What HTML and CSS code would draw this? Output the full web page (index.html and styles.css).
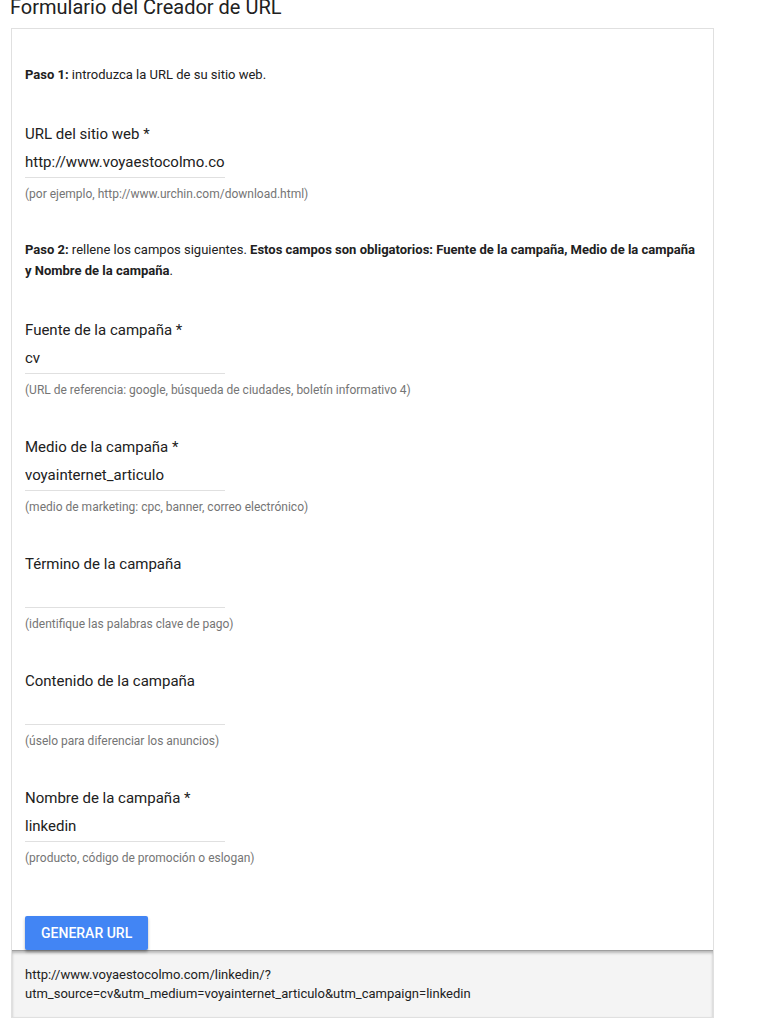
FILE: index.html
```html
<!DOCTYPE html>
<html lang="es">
<head>
<meta charset="utf-8">
<title>Formulario del Creador de URL</title>
<link rel="stylesheet" href="styles.css">
</head>
<body>
<h1 class="title">Formulario del Creador de URL</h1>
<div class="card">
  <div class="form">
    <p class="step"><b>Paso 1:</b> introduzca la URL de su sitio web.</p>
    <div class="field">
      <label class="label">URL del sitio web *</label>
      <input class="input" type="text" value="http://www.voyaestocolmo.com/linkedin/">
      <div class="hint">(por ejemplo, http://www.urchin.com/download.html)</div>
    </div>
    <p class="step"><b>Paso 2:</b> rellene los campos siguientes. <b>Estos campos son obligatorios: Fuente de la campaña, Medio de la campaña y Nombre de la campaña</b>.</p>
    <div class="field">
      <label class="label">Fuente de la campaña *</label>
      <input class="input" type="text" value="cv">
      <div class="hint">(URL de referencia: google, búsqueda de ciudades, boletín informativo 4)</div>
    </div>
    <div class="field">
      <label class="label">Medio de la campaña *</label>
      <input class="input" type="text" value="voyainternet_articulo">
      <div class="hint">(medio de marketing: cpc, banner, correo electrónico)</div>
    </div>
    <div class="field">
      <label class="label">Término de la campaña</label>
      <input class="input" type="text" value="">
      <div class="hint">(identifique las palabras clave de pago)</div>
    </div>
    <div class="field">
      <label class="label">Contenido de la campaña</label>
      <input class="input" type="text" value="">
      <div class="hint">(úselo para diferenciar los anuncios)</div>
    </div>
    <div class="field">
      <label class="label">Nombre de la campaña *</label>
      <input class="input" type="text" value="linkedin">
      <div class="hint">(producto, código de promoción o eslogan)</div>
    </div>
    <button class="btn" type="button">GENERAR URL</button>
  </div>
  <div class="result">http://www.voyaestocolmo.com/linkedin/?<br>utm_source=cv&amp;utm_medium=voyainternet_articulo&amp;utm_campaign=linkedin</div>
</div>
</body>
</html>
```

FILE: styles.css
```css
* { box-sizing: border-box; }

body {
  margin: 0;
  background: #fff;
  font-family: Roboto, "Noto Sans", Arial, sans-serif;
  color: #212121;
}

.title {
  margin: -5px 0 9px 10px;
  font-size: 20px;
  line-height: 24px;
  font-weight: 400;
  color: #212121;
}

.card {
  margin-left: 11px;
  width: 703px;
  border: 1px solid #e0e0e0;
  background: #fff;
}

.form {
  padding: 35px 13px 0;
  display: flex;
  flex-direction: column;
  align-items: flex-start;
}

.step {
  margin: 0;
  font-size: 13px;
  line-height: 21px;
  color: #212121;
}

.step b { font-weight: 700; }

.field {
  display: flex;
  flex-direction: column;
  margin-top: 39px;
}

.field + .step { margin-top: 37px; }

.label {
  font-size: 15px;
  line-height: 20px;
  color: #212121;
}

.input {
  display: block;
  width: 200px;
  height: 34px;
  margin: 0;
  padding: 8px 0 5px;
  border: 0;
  border-bottom: 1px solid #e0e0e0;
  background: transparent;
  font-family: inherit;
  font-size: 15px;
  line-height: 20px;
  color: #212121;
  outline: none;
}

.hint {
  margin-top: 8px;
  font-size: 12px;
  line-height: 16px;
  color: #757575;
}

.btn {
  position: relative;
  z-index: 1;
  margin-top: 50px;
  height: 34px;
  padding: 0 16px;
  border: 0;
  border-radius: 2px;
  background: #4285f4;
  color: #fff;
  font-family: inherit;
  font-size: 14px;
  font-weight: 500;
  box-shadow: 0 2px 3px rgba(0, 0, 0, 0.3);
}

.result {
  border-top: 1px solid #9e9e9e;
  box-shadow: inset 0 2px 3px rgba(0, 0, 0, 0.25);
  background: #f4f4f4;
  padding: 14px 13px 14px;
  font-size: 13px;
  line-height: 19px;
  color: #212121;
}
```
